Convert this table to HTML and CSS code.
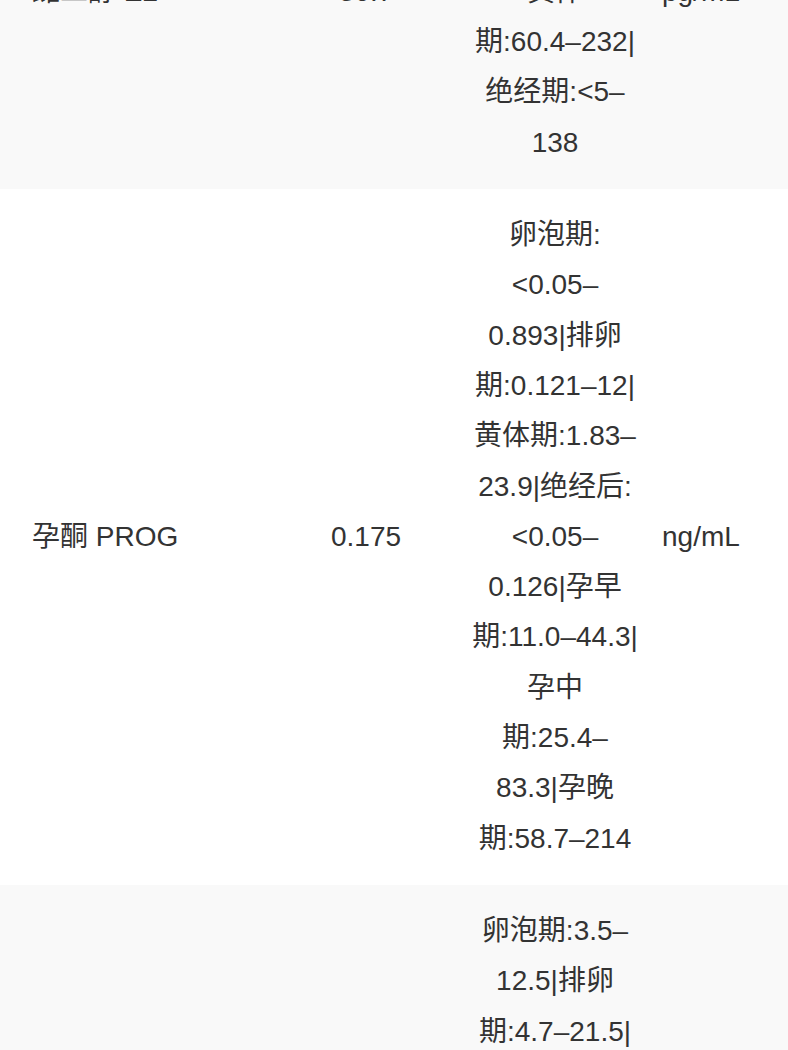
FILE: index.html
```html
<!DOCTYPE html>
<html lang="zh-CN">
<head>
<meta charset="utf-8">
<title>检验报告</title>
<link rel="stylesheet" href="styles.css">
</head>
<body>
<div class="report">
  <table class="results">
    <colgroup>
      <col class="c-name">
      <col class="c-value">
      <col class="c-range">
      <col class="c-unit">
    </colgroup>
    <tbody>
      <tr class="row alt">
        <td class="name">雌二醇 E2</td>
        <td class="value">36.7</td>
        <td class="range">卵泡期:<br>12.5–166|排卵<br>期:85.8–498|<br>黄体<br>期:60.4–232|<br>绝经期:&lt;5–<br>138</td>
        <td class="unit">pg/mL</td>
      </tr>
      <tr class="row">
        <td class="name">孕酮 PROG</td>
        <td class="value">0.175</td>
        <td class="range">卵泡期:<br>&lt;0.05–<br>0.893|排卵<br>期:0.121–12|<br>黄体期:1.83–<br>23.9|绝经后:<br>&lt;0.05–<br>0.126|孕早<br>期:11.0–44.3|<br>孕中<br>期:25.4–<br>83.3|孕晚<br>期:58.7–214</td>
        <td class="unit">ng/mL</td>
      </tr>
      <tr class="row alt">
        <td class="name">卵泡刺激素 FSH</td>
        <td class="value">5.62</td>
        <td class="range">卵泡期:3.5–<br>12.5|排卵<br>期:4.7–21.5|<br>黄体期:1.7–<br>7.7|绝经期:<br>25.8–<br>134.8</td>
        <td class="unit">mIU/mL</td>
      </tr>
    </tbody>
  </table>
</div>
</body>
</html>
```

FILE: styles.css
```css
html, body {
  margin: 0;
  padding: 0;
  background: #ffffff;
}

body {
  font-family: "Liberation Sans", "Noto Sans CJK SC", sans-serif;
  color: #333333;
  font-size: 28px;
  line-height: 50.3px;
}

.report {
  margin-top: -205px;
}

.results {
  width: 100%;
  border-collapse: collapse;
  table-layout: fixed;
}

.c-name { width: 272px; }
.c-value { width: 188px; }
.c-range { width: 190px; }
.c-unit { width: 138px; }

.row td {
  padding: 21px 12px;
  vertical-align: middle;
}

.row.alt {
  background: #f9f9f9;
}

.row td.name {
  padding-left: 32px;
  text-align: left;
  white-space: nowrap;
}

.value {
  text-align: center;
}

.range {
  text-align: center;
  white-space: nowrap;
}

.unit {
  text-align: left;
  white-space: nowrap;
}
```
